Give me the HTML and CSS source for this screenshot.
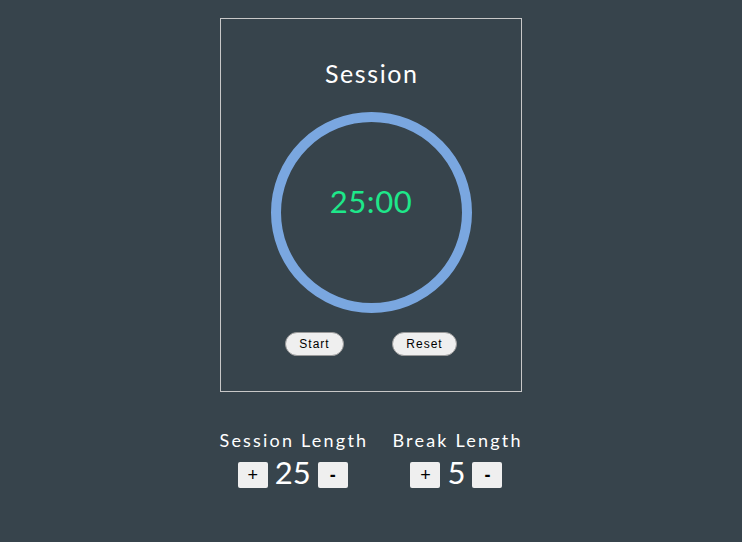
FILE: index.html
```html
<!DOCTYPE html>
<html>
<head>
<meta charset="utf-8">
<link rel="stylesheet" href="styles.css">
</head>
<body>
<main class="app">
  <section class="timer-box">
    <h1 class="title">Session</h1>
    <div class="ring">
      <span class="time">25:00</span>
    </div>
    <div class="controls">
      <button class="pill">Start</button>
      <button class="pill">Reset</button>
    </div>
  </section>
  <section class="settings">
    <div class="setting">
      <div class="label">Session Length</div>
      <div class="adjust">
        <button class="step">+</button>
        <span class="value">25</span>
        <button class="step">-</button>
      </div>
    </div>
    <div class="setting">
      <div class="label">Break Length</div>
      <div class="adjust">
        <button class="step">+</button>
        <span class="value">5</span>
        <button class="step">-</button>
      </div>
    </div>
  </section>
</main>
</body>
</html>
```
FILE: styles.css
```css
html, body {
  margin: 0;
  padding: 0;
  background: #37444c;
  height: 100%;
}
body {
  font-family: "Lato", "Noto Sans", sans-serif;
  color: #ffffff;
}
.app {
  display: flex;
  flex-direction: column;
  align-items: center;
  padding-top: 18px;
}
.timer-box {
  box-sizing: border-box;
  width: 302px;
  height: 374px;
  border: 1px solid #c8c8c8;
  display: flex;
  flex-direction: column;
  align-items: center;
}
.title {
  margin: 39px 0 0;
  height: 30px;
  line-height: 30px;
  font-size: 25px;
  font-weight: 400;
  letter-spacing: 1.6px;
  padding-left: 1.6px;
}
.ring {
  margin-top: 24px;
  box-sizing: border-box;
  width: 201px;
  height: 201px;
  border: 10px solid #7aa7e0;
  border-radius: 50%;
  display: flex;
  align-items: center;
  justify-content: center;
}
.time {
  color: #1ee88a;
  font-size: 31px;
  letter-spacing: 0.6px;
  margin-top: -24px;
}
.controls {
  margin-top: 19px;
  display: flex;
  gap: 48px;
}
.pill {
  font-family: "Liberation Sans", Arial, sans-serif;
  font-size: 12px;
  letter-spacing: 1px;
  color: #000;
  background: #efefef;
  border: 1px solid #9a9a9a;
  border-radius: 12px;
  height: 24px;
  padding: 0 12px;
}
.pill:first-child { width: 59px; }
.pill:last-child { width: 65px; }
.settings {
  margin-top: 37px;
  display: flex;
  gap: 22px;
  padding-right: 2px;
}
.setting {
  display: flex;
  flex-direction: column;
  align-items: center;
}
.label {
  font-size: 18px;
  letter-spacing: 2.2px;
  line-height: 22px;
  padding-left: 2.2px;
}
.adjust {
  margin-top: 3px;
  display: flex;
  align-items: center;
  gap: 7px;
}
.value {
  font-size: 31px;
  line-height: 36px;
}
.step {
  width: 30px;
  height: 26px;
  border: none;
  border-radius: 2px;
  background: #efefef;
  color: #000;
  font-family: "Liberation Sans", Arial, sans-serif;
  font-size: 18px;
  font-weight: 400;
  padding: 0;
  margin-top: 6px;
}
.step:last-child {
  font-weight: 700;
}
```
